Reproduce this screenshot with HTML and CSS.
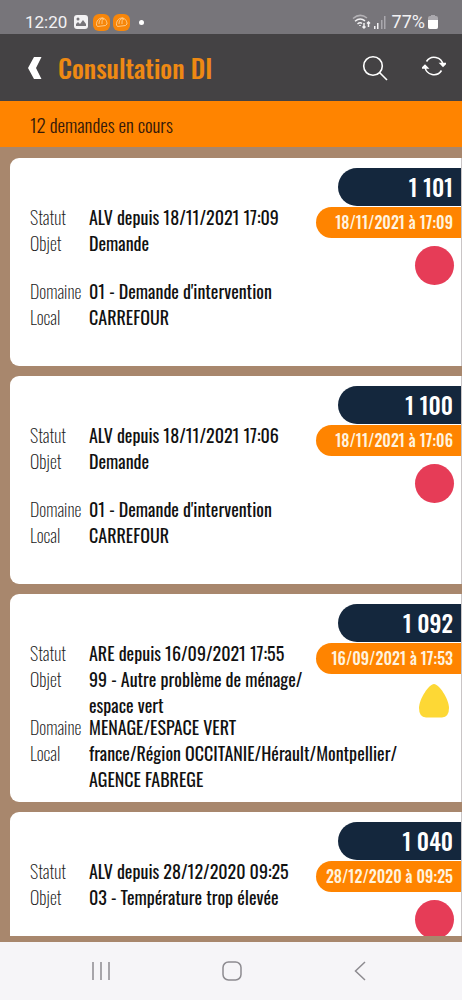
FILE: index.html
```html
<!DOCTYPE html>
<html lang="fr">
<head>
<meta charset="utf-8">
<meta name="viewport" content="width=device-width, initial-scale=1">
<title>Consultation DI</title>
<link rel="stylesheet" href="styles.css">
</head>
<body>
<div class="app">
  <div class="statusbar">
    <span class="clock">12:20</span>
    <svg class="photo" viewBox="0 0 14 14" width="14" height="14"><rect width="14" height="14" rx="3" fill="#f3f2f4"/><circle cx="4" cy="4" r="1.5" fill="#77757a"/><path d="M2 11V9l2-2 2 2 3-4 3 4v2z" fill="#77757a"/></svg>
    <svg class="helmet" viewBox="0 0 17 17" width="17" height="17"><rect width="17" height="17" rx="6" fill="#f7860a"/><path d="M3.500 11C3 7 6 4 9 4c3 0 5 3 5 6l-1.500 1.500-8 1zM6 10c0-3 1-5 4-6M9 10c0-3 0-5 2-5" fill="none" stroke="#ffd9a3" stroke-width=".8"/></svg>
    <svg class="helmet" viewBox="0 0 17 17" width="17" height="17"><rect width="17" height="17" rx="6" fill="#f7860a"/><path d="M3.500 11C3 7 6 4 9 4c3 0 5 3 5 6l-1.500 1.500-8 1zM6 10c0-3 1-5 4-6M9 10c0-3 0-5 2-5" fill="none" stroke="#ffd9a3" stroke-width=".8"/></svg>
    <span class="more"></span>
    <span class="system">
      <svg viewBox="0 0 19 16" width="19" height="16" fill="none" stroke="#f3f2f4" stroke-width="1.500"><path d="M1 4.500Q8 -1.500 15 4" stroke="#b3b1b5"/><path d="M3 7.300Q8 3 13 6.800M5.500 10Q8 7.800 10 9.500"/><path d="M8 11v1M12 9v5M10.500 12.500L12 14l1.500-1.500M16.500 13V8M15 9.500L16.500 8 18 9.500"/></svg>
      <svg viewBox="0 0 12 13" width="12" height="13"><path d="M0 10h1.500v3H0zM3 7h1.500v6H3z" fill="#f3f2f4"/><path d="M7 4h1.500v9H7zM10 0h1.500v13H10z" fill="#aaa8ad"/></svg>
      <span class="percent">77%</span>
      <svg viewBox="0 0 10 14" width="10" height="14"><path d="M3 0h4v1h1a2 2 0 0 1 2 2v9a2 2 0 0 1-2 2H2a2 2 0 0 1-2-2V3a2 2 0 0 1 2-2h1z" fill="#aaa8ad"/><path d="M0 5h10v7a2 2 0 0 1-2 2H2a2 2 0 0 1-2-2z" fill="#fff"/></svg>
    </span>
  </div>

  <header class="toolbar">
    <button class="icon" aria-label="Retour"><svg viewBox="0 0 14 22" width="14" height="22"><path d="M6 0h7.500L8 11l5.500 11H6L0 11z" fill="#fff"/></svg></button>
    <h1 class="title">Consultation DI</h1>
    <button class="icon" aria-label="Rechercher"><svg viewBox="0 0 26 26" width="26" height="26" fill="none" stroke="#fff" stroke-width="1.600"><circle cx="11" cy="11" r="9.300"/><path d="M17.500 17.500L25 25"/></svg></button>
    <button class="icon refresh" aria-label="Actualiser"><svg viewBox="0 0 24 22" width="24" height="22" fill="none" stroke="#fff" stroke-width="1.600"><path d="M4.500 6.500A9 9 0 0 1 21 10M19.500 15.500A9 9 0 0 1 3 12"/><path d="M18.500 8.500L21 11l2.500-2.500zM.5 13L3 10.500 5.500 13z" fill="#fff"/></svg></button>
  </header>

  <p class="summary">12 demandes en cours</p>

  <main class="list">
    <article class="card">
      <dl class="details">
        <dt>Statut</dt><dd>ALV depuis 18/11/2021 17:09</dd>
        <dt>Objet</dt><dd>Demande</dd>
        <dt>Domaine</dt><dd>01 - Demande d'intervention</dd>
        <dt>Local</dt><dd>CARREFOUR</dd>
      </dl>
      <div class="badges"><strong class="number">1 101</strong><span class="date">18/11/2021 à 17:09</span><span class="dot"></span></div>
    </article>
    <article class="card">
      <dl class="details">
        <dt>Statut</dt><dd>ALV depuis 18/11/2021 17:06</dd>
        <dt>Objet</dt><dd>Demande</dd>
        <dt>Domaine</dt><dd>01 - Demande d'intervention</dd>
        <dt>Local</dt><dd>CARREFOUR</dd>
      </dl>
      <div class="badges"><strong class="number">1 100</strong><span class="date">18/11/2021 à 17:06</span><span class="dot"></span></div>
    </article>
    <article class="card">
      <dl class="details">
        <dt>Statut</dt><dd>ARE depuis 16/09/2021 17:55</dd>
        <dt>Objet</dt><dd>99 - Autre problème de ménage/<br>espace vert</dd>
        <dt>Domaine</dt><dd>MENAGE/ESPACE VERT</dd>
        <dt>Local</dt><dd>france/Région OCCITANIE/Hérault/Montpellier/<br>AGENCE FABREGE</dd>
      </dl>
      <div class="badges"><strong class="number">1 092</strong><span class="date">16/09/2021 à 17:53</span><svg class="drop" viewBox="0 0 30 34" width="30" height="34"><path d="M15 0C20 0 30 15 30 24Q30 33 23 33.500H7Q0 33 0 24C0 15 10 0 15 0z" fill="#fdd835"/></svg></div>
    </article>
    <article class="card">
      <dl class="details">
        <dt>Statut</dt><dd>ALV depuis 28/12/2020 09:25</dd>
        <dt>Objet</dt><dd>03 - Température trop élevée</dd>
      </dl>
      <div class="badges"><strong class="number">1 040</strong><span class="date">28/12/2020 à 09:25</span><span class="dot"></span></div>
    </article>
  </main>

  <nav class="navbar">
    <button class="icon" aria-label="Applications récentes"><svg viewBox="0 0 18 18" width="18" height="18" stroke="#8d8b90" stroke-width="1.500"><path d="M1 0v18M9 0v18M17 0v18"/></svg></button>
    <button class="icon" aria-label="Accueil"><svg viewBox="0 0 20 20" width="20" height="20" fill="none" stroke="#8d8b90" stroke-width="1.500"><rect x="1" y="1" width="18" height="18" rx="5.500"/></svg></button>
    <button class="icon" aria-label="Précédent"><svg viewBox="0 0 12 20" width="12" height="20" fill="none" stroke="#8d8b90" stroke-width="1.500"><path d="M11 1L1.500 10 11 19"/></svg></button>
  </nav>
</div>
</body>
</html>
```
FILE: styles.css
```css
* { box-sizing: border-box; }
body {
  margin: 0;
  background: #a8876d;
  color: #111;
  font: 18px/26px Oswald, "Roboto Condensed", "Liberation Sans Narrow", "Liberation Sans", sans-serif;
}
.app {
  display: flex;
  flex-direction: column;
  height: 100vh;
}
.statusbar {
  display: flex;
  align-items: center;
  gap: 3px;
  height: 34px;
  padding: 10px 24px 0 25px;
  flex: none;
  background: #77757a;
  color: #f3f2f4;
  font: 17px/24px Roboto, sans-serif;
}
.clock { margin-right: 4px; }
.photo { margin-right: 2px; }
.more {
  width: 5px;
  height: 5px;
  margin-left: 6px;
  border-radius: 50%;
  background: #fff;
}
.system {
  display: flex;
  align-items: center;
  gap: 3px;
  margin-left: auto;
}
.percent { margin-left: 3px; font-size: 18px; }
.toolbar {
  display: flex;
  align-items: center;
  height: 67px;
  padding: 0 16px 0 28px;
  flex: none;
  background: #444244;
}
.icon {
  display: flex;
  padding: 0;
  border: 0;
  background: none;
}
.title {
  flex: 1;
  margin: 0 0 0 16px;
  color: #ee8913;
  font-weight: 500;
  font-size: 26px;
  line-height: 36px;
}
.toolbar .refresh { margin: 0 0 3px 34px; }
.summary {
  margin: 0;
  padding: 10px 30px;
  flex: none;
  background: #ff8400;
  color: #35190a;
  font-weight: 300;
  font-size: 19px;
}
.list {
  display: flex;
  flex-direction: column;
  gap: 10px;
  flex: 1;
  min-height: 0;
  margin-bottom: 6px;
  padding: 11px 0 0 10px;
  overflow: hidden;
}
.card {
  display: grid;
  min-height: 208px;
  flex: none;
  border-right: 1px solid #c9c5c6;
  border-radius: 9px 0 0 9px;
  background: #fff;
}
.details, .badges { grid-area: 1 / 1; }
.details {
  display: grid;
  grid-template-columns: 59px 1fr;
  grid-template-rows: 26px 48px 26px auto;
  align-content: start;
  margin: 0;
  padding: 46px 0 0 20px;
}
dt { color: #222; font-weight: 200; }
dd { margin: 0; font-weight: 400; white-space: nowrap; }
.badges {
  display: flex;
  flex-direction: column;
  align-items: flex-end;
  justify-self: end;
  padding-top: 10px;
  color: #fff;
  text-align: right;
}
.number {
  width: 123px;
  margin-bottom: 1px;
  padding-right: 8px;
  border-radius: 19px 0 0 19px;
  background: #14273d;
  font-weight: 500;
  font-size: 23px;
  line-height: 38px;
}
.date {
  width: 145px;
  padding-right: 8px;
  border-radius: 16px 0 0 16px;
  background: #ff8400;
  color: #fff3df;
  font-weight: 500;
  font-size: 16px;
  line-height: 31px;
}
.dot {
  width: 39px;
  height: 39px;
  margin: 8px 7px 0 0;
  border-radius: 50%;
  background: #e63c57;
}
.drop { margin: 10px 12px 0 0; }
.navbar {
  display: flex;
  align-items: center;
  justify-content: space-between;
  height: 58px;
  padding: 0 96px 0 92px;
  flex: none;
  background: #f6f5f8;
}
```
